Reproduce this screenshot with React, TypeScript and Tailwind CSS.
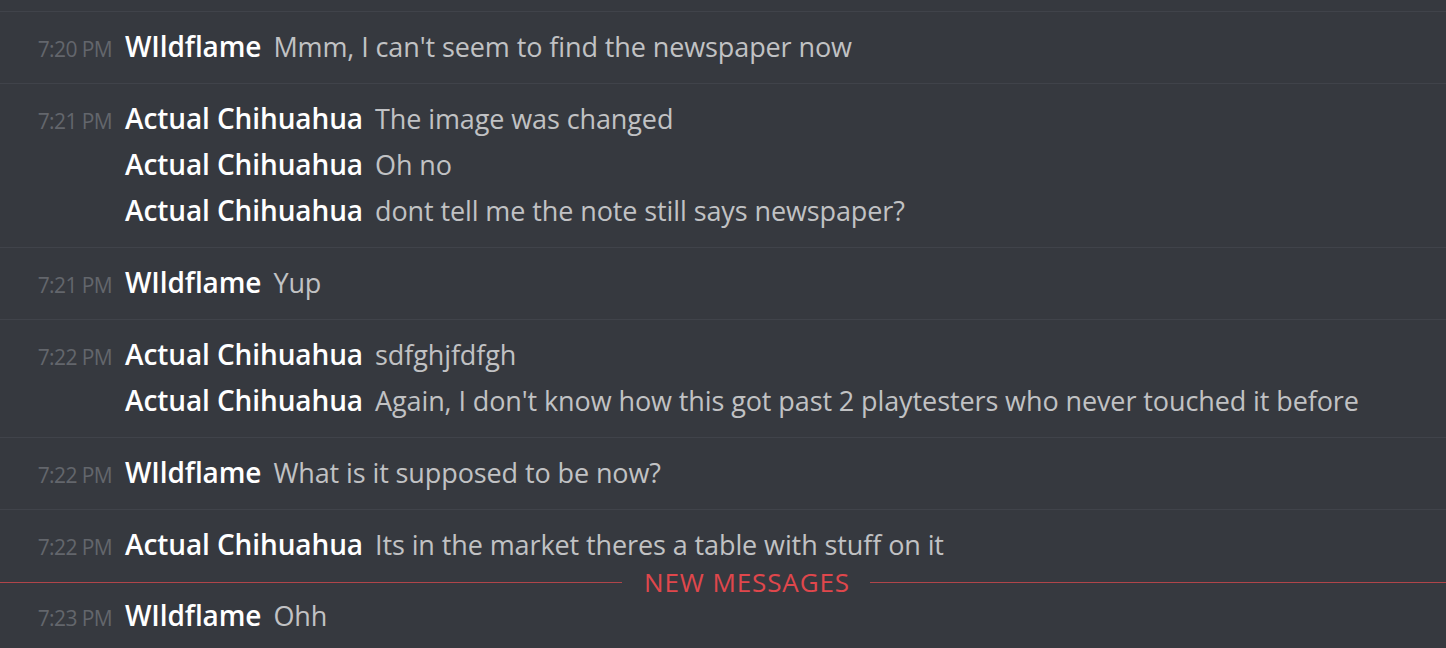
import React from 'react';

type Line = { name: string; text: string };
type Group = { time: string; lines: Line[] };

const groups: Group[] = [
  { time: '7:20 PM', lines: [{ name: 'WIldflame', text: "Mmm, I can't seem to find the newspaper now" }] },
  {
    time: '7:21 PM',
    lines: [
      { name: 'Actual Chihuahua', text: 'The image was changed' },
      { name: 'Actual Chihuahua', text: 'Oh no' },
      { name: 'Actual Chihuahua', text: 'dont tell me the note still says newspaper?' },
    ],
  },
  { time: '7:21 PM', lines: [{ name: 'WIldflame', text: 'Yup' }] },
  {
    time: '7:22 PM',
    lines: [
      { name: 'Actual Chihuahua', text: 'sdfghjfdfgh' },
      { name: 'Actual Chihuahua', text: "Again, I don't know how this got past 2 playtesters who never touched it before" },
    ],
  },
  { time: '7:22 PM', lines: [{ name: 'WIldflame', text: 'What is it supposed to be now?' }] },
  { time: '7:22 PM', lines: [{ name: 'Actual Chihuahua', text: 'Its in the market theres a table with stuff on it' }] },
];

const MessageGroup: React.FC<{ group: Group; last?: boolean }> = ({ group, last = false }) => (
  <div className={last ? 'pt-[9px]' : 'pt-[11px] pb-[14px] border-t border-[#40434a]'}>
    {group.lines.map((line, i) => (
      <div key={i} className="flex items-baseline h-[46px] leading-[46px]">
        <span className="w-[112px] shrink-0 text-right text-[21px] text-[#63666c] tracking-[-0.6px]">
          {i === 0 ? group.time : ''}
        </span>
        <span className="ml-[13px] text-[28px] font-semibold text-white whitespace-nowrap tracking-[-0.1px]">
          {line.name}
        </span>
        <span className="ml-[12px] text-[27px] text-[#c1c2c4] whitespace-nowrap tracking-[-0.1px]">{line.text}</span>
      </div>
    ))}
  </div>
);

export default function App() {
  return (
    <div className="w-[1446px] h-[648px] overflow-hidden bg-[#36393f] font-['Open_Sans',_sans-serif]">
      <div className="h-[11px]" />
      {groups.map((g, i) => (
        <MessageGroup key={i} group={g} />
      ))}
      <div className="flex items-center h-[2px]">
        <div className="w-[622px] border-t border-[#b0454a]" />
        <span className="shrink-0 pl-[22px] pr-[20px] text-[26px] tracking-[0.9px] text-[#e0474c] leading-none whitespace-nowrap">
          NEW MESSAGES
        </span>
        <div className="flex-1 border-t border-[#b0454a]" />
      </div>
      <MessageGroup group={{ time: '7:23 PM', lines: [{ name: 'WIldflame', text: 'Ohh' }] }} last />
    </div>
  );
}
